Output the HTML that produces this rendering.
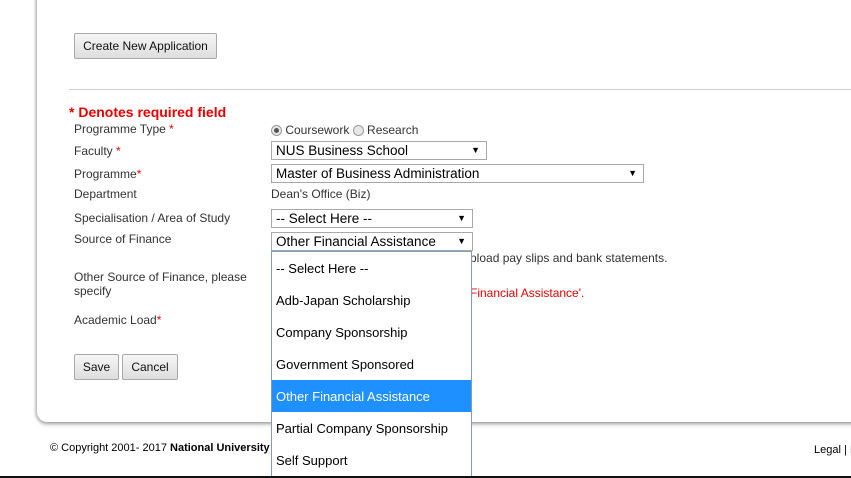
<!DOCTYPE html>
<html><head><style>
body{margin:0;width:851px;height:478px;overflow:hidden;background:#fff;font-family:"Liberation Sans",sans-serif;font-size:12px;color:#333;position:relative}
.a{position:absolute;white-space:nowrap}
.card{position:absolute;left:37px;top:-20px;width:900px;height:442px;background:#fff;border-radius:10px;box-shadow:0 2px 4px rgba(0,0,0,.35),-1px 0 3px rgba(0,0,0,.2)}
.btn{position:absolute;background:linear-gradient(#f6f6f6,#dedede);border:1px solid #a9a9a9;border-radius:2px;font-size:12px;color:#111;text-align:center;box-sizing:border-box}
.sel{position:absolute;border:1px solid #a9a9a9;background:#fff;box-sizing:border-box;font-size:13.5px;color:#000;padding:1px 4px;height:19px}
.sel:after{content:"▼";position:absolute;right:6px;top:3px;font-size:9px}
.r{color:#e00}
.dd{position:absolute;left:271px;top:251px;width:201px;height:226px;border:1px solid #7f9db9;background:#fff;box-sizing:border-box}
.dd div{height:32px;line-height:34px;padding-left:4px;font-size:13px;color:#000}
.radio{display:inline-block;width:11px;height:11px;border:1px solid #999;border-radius:50%;background:#e8e8e8;vertical-align:-2px;box-sizing:border-box;position:relative}
</style></head><body>
<div class="card"></div>
<div class="btn" style="left:74px;top:33px;width:143px;height:26px;line-height:24px">Create New Application</div>
<div class="a" style="left:69px;top:89px;width:800px;border-top:1px solid #ccc"></div>
<div class="a r" style="left:69px;top:104px;font-size:14px;font-weight:bold">* Denotes required field</div>
<div class="a" style="left:74px;top:122px">Programme Type <span class="r">*</span></div>
<div class="a" style="left:271px;top:123px"><span class="radio"><span style="position:absolute;left:2px;top:2px;width:5px;height:5px;border-radius:50%;background:#555"></span></span> Coursework <span class="radio"></span> Research</div>
<div class="a" style="left:74px;top:144px">Faculty <span class="r">*</span></div>
<div class="sel" style="left:271px;top:141px;width:216px">NUS Business School</div>
<div class="a" style="left:74px;top:167px">Programme<span class="r">*</span></div>
<div class="sel" style="left:271px;top:164px;width:373px">Master of Business Administration</div>
<div class="a" style="left:74px;top:187px">Department</div>
<div class="a" style="left:271px;top:187px">Dean's Office (Biz)</div>
<div class="a" style="left:74px;top:211px">Specialisation / Area of Study</div>
<div class="sel" style="left:271px;top:209px;width:202px">-- Select Here --</div>
<div class="a" style="left:74px;top:232px">Source of Finance</div>
<div class="sel" style="left:271px;top:232px;width:202px">Other Financial Assistance</div>
<div class="a" style="left:470px;top:251px">pload pay slips and bank statements.</div>
<div class="a" style="left:74px;top:270px;line-height:14px">Other Source of Finance, please<br>specify</div>
<div class="a r" style="left:470px;top:286px">Financial Assistance'.</div>
<div class="a" style="left:74px;top:313px">Academic Load<span class="r">*</span></div>
<div class="btn" style="left:74px;top:354px;width:45px;height:26px;line-height:24px">Save</div>
<div class="btn" style="left:122px;top:354px;width:56px;height:26px;line-height:24px">Cancel</div>
<div class="a" style="left:50px;top:442px;font-size:11px;color:#000">© Copyright 2001- 2017 <b>National University</b></div>
<div class="a" style="left:814px;top:444px;font-size:11px;color:#000">Legal | I</div>
<div class="dd">
<div>-- Select Here --</div><div>Adb-Japan Scholarship</div><div>Company Sponsorship</div><div>Government Sponsored</div><div style="background:#1e90ff;color:#fff">Other Financial Assistance</div><div>Partial Company Sponsorship</div><div>Self Support</div>
</div>
<div class="a" style="left:0;top:476px;width:851px;height:2px;background:#111"></div>
</body></html>
